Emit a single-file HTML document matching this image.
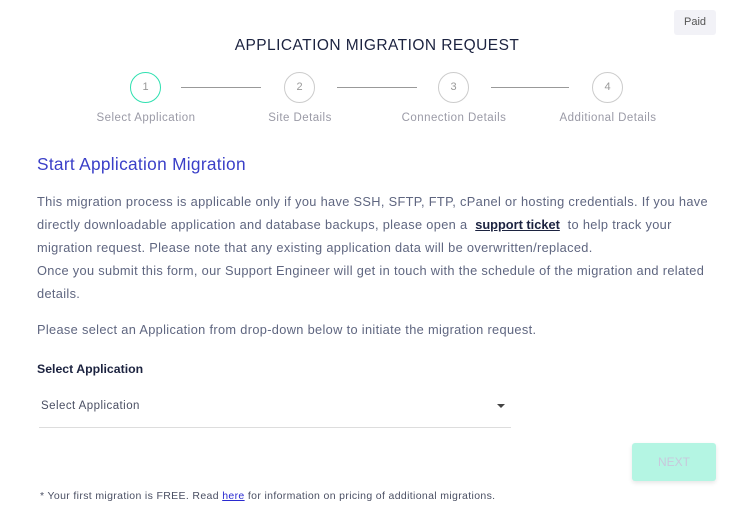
<!DOCTYPE html>
<html><head><style>
body{margin:0;width:754px;height:512px;background:#fff;font-family:"Liberation Sans",sans-serif;position:relative;overflow:hidden}
.a{position:absolute;white-space:nowrap}
.c{position:absolute;width:31px;height:31px;border:1.5px solid #ccc;border-radius:50%;box-sizing:border-box;text-align:center;line-height:28px;font-size:11px;color:#999;top:72px}
.l{position:absolute;top:87px;height:1px;background:#999}
.lb{position:absolute;top:112px;font-size:11.5px;color:#9a9aa6;width:180px;text-align:center;letter-spacing:.45px}
.p{position:absolute;left:37px;font-size:12.8px;color:#5f6680;white-space:nowrap;letter-spacing:.33px}
</style></head><body>
<div class="a" style="left:674px;top:10px;width:42px;height:25px;background:#f2f2f7;border-radius:3px;font-size:11px;color:#555;text-align:center;line-height:25px">Paid</div>
<div class="a" style="left:0;width:754px;top:37px;text-align:center;font-size:15.5px;color:#1c2340;letter-spacing:.45px">APPLICATION MIGRATION REQUEST</div>
<div class="c" style="left:130px;border-color:#2fe0b0">1</div>
<div class="c" style="left:284px">2</div>
<div class="c" style="left:438px">3</div>
<div class="c" style="left:592px">4</div>
<div class="l" style="left:181px;width:80px"></div>
<div class="l" style="left:337px;width:80px"></div>
<div class="l" style="left:491px;width:78px"></div>
<div class="lb" style="left:56px">Select Application</div>
<div class="lb" style="left:210px">Site Details</div>
<div class="lb" style="left:364px">Connection Details</div>
<div class="lb" style="left:518px">Additional Details</div>
<div class="a" style="left:37px;top:154px;font-size:17.3px;color:#3a3fc8;letter-spacing:.3px">Start Application Migration</div>
<div class="p" style="top:194px">This migration process is applicable only if you have SSH, SFTP, FTP, cPanel or hosting credentials. If you have</div>
<div class="p" style="top:217px">directly downloadable application and database backups, please open a &nbsp;<b style="color:#1c2340;text-decoration:underline;letter-spacing:0">support ticket</b>&nbsp; to help track your</div>
<div class="p" style="top:240px">migration request. Please note that any existing application data will be overwritten/replaced.</div>
<div class="p" style="top:263px">Once you submit this form, our Support Engineer will get in touch with the schedule of the migration and related</div>
<div class="p" style="top:286px">details.</div>
<div class="p" style="top:322px">Please select an Application from drop-down below to initiate the migration request.</div>
<div class="p" style="top:362px;color:#1c2340;font-weight:bold;font-size:12.3px;letter-spacing:0">Select Application</div>
<div class="a" style="left:41px;top:400px;font-size:11.5px;color:#4a4f63;letter-spacing:.45px">Select Application</div>
<div class="a" style="left:497px;top:404px;width:0;height:0;border-left:4px solid transparent;border-right:4px solid transparent;border-top:4px solid #444"></div>
<div class="a" style="left:39px;top:427px;width:472px;height:1px;background:#ddd"></div>
<div class="a" style="left:632px;top:443px;width:84px;height:38px;background:#b4f5e3;border-radius:3px;box-shadow:0 2px 4px rgba(0,0,0,.1);text-align:center;line-height:38px;font-size:12px;color:#c8c8dc">NEXT</div>
<div class="a" style="left:40px;top:490px;font-size:10.5px;color:#4a4f63;letter-spacing:.35px">* Your first migration is FREE. Read <span style="color:#2a2ad0;text-decoration:underline">here</span> for information on pricing of additional migrations.</div>
</body></html>
